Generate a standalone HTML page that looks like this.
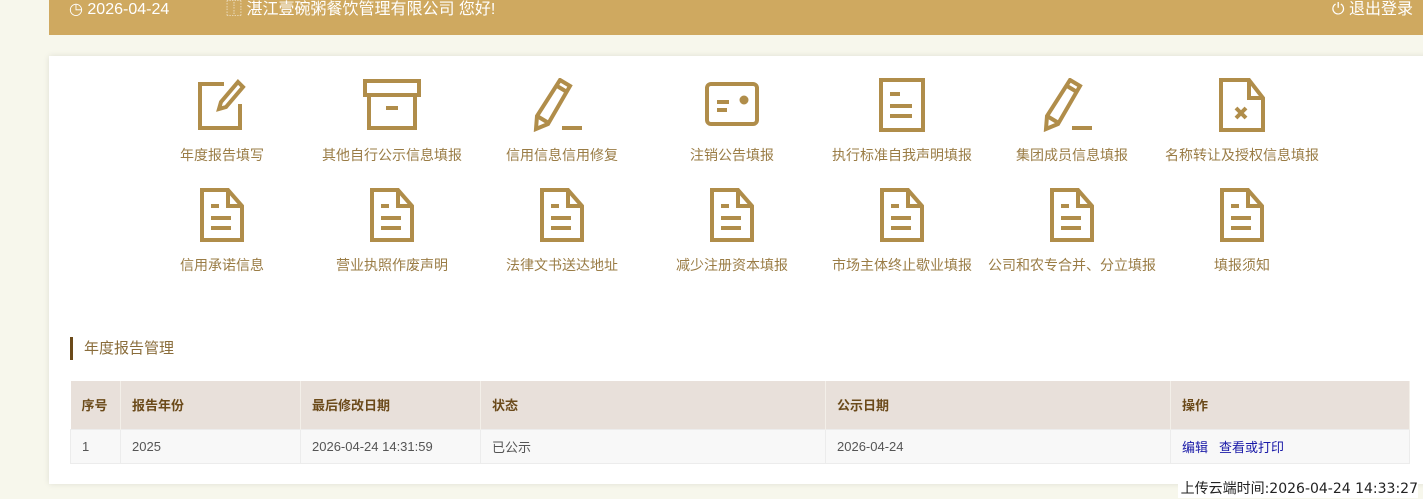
<!DOCTYPE html>
<html><head><meta charset="utf-8"><style>
*{margin:0;padding:0;box-sizing:border-box}
body{width:1423px;height:499px;background:#f7f7ec;font-family:"Liberation Sans","Noto Sans CJK SC",sans-serif;position:relative;overflow:hidden}
.hdr{position:absolute;left:49px;top:0;width:1374px;height:35px;background:#cfa960;color:#fff;font-size:16px}
.hdr span{position:absolute;top:0;line-height:19px}
.card{position:absolute;left:49px;top:56px;width:1380px;height:428px;background:#fff;box-shadow:0 0 6px rgba(0,0,0,.1)}
.it{position:absolute;width:170px;text-align:center;font-size:14px;color:#9a7c45}
.it svg{display:block;margin:0 auto 0}
.it div{position:absolute;left:0;width:170px;top:67px;white-space:nowrap}
.ttl{position:absolute;left:21px;top:281px;height:23px;border-left:3px solid #6b4a1a;padding-left:11px;font-size:15px;color:#8a6d3b;line-height:23px}
table{position:absolute;left:21px;top:325px;width:1340px;border-collapse:collapse;font-size:13px}
th{background:#e8e0da;color:#6b4a1a;height:48px;text-align:left;padding-left:11px;border-right:1px solid #f3efe9;font-weight:bold}
td{background:#f8f8f8;height:34px;padding-left:11px;color:#555;border:1px solid #ececec}
a{color:#1a1aa8;text-decoration:none;margin-right:11px}
.up{position:absolute;right:5px;top:476px;color:#222;background:#fff;padding:2px 0 0 3px;font-family:"DejaVu Sans","Noto Sans CJK SC",sans-serif;font-size:14px}
</style></head><body>
<div class="hdr">
<span style="left:20px">◷ 2026-04-24</span>
<span style="left:177px">⿰ 湛江壹碗粥餐饮管理有限公司 您好!</span>
<span style="right:10px">⏻ 退出登录</span>
</div>
<div class="card">
<div class="it" style="left:88px;top:22px"><svg width="52" height="54" viewBox="0 0 52 54" fill="none" stroke="#b08d4a" stroke-width="4"><path d="M28 6H4v44h40V26"/><path d="M42 4l5 5-17 20-7 2 2-7z"/></svg><div>年度报告填写</div></div>
<div class="it" style="left:258px;top:22px"><svg width="60" height="54" viewBox="0 0 60 54" fill="none" stroke="#b08d4a" stroke-width="4"><rect x="3" y="3" width="54" height="14"/><path d="M7 17v33h46V17"/><path d="M24 30h12"/></svg><div>其他自行公示信息填报</div></div>
<div class="it" style="left:428px;top:22px"><svg width="60" height="54" viewBox="0 0 60 54" fill="none" stroke="#b08d4a" stroke-width="4"><path d="M28 2l10 6-22 38-12 5 1-13z"/><path d="M5 38l10 6M25 8l10 6"/><path d="M30 50h20"/></svg><div>信用信息信用修复</div></div>
<div class="it" style="left:598px;top:22px"><svg width="60" height="54" viewBox="0 0 60 54" fill="none" stroke="#b08d4a" stroke-width="4"><rect x="5" y="6" width="50" height="40" rx="4"/><path d="M15 24h12M15 32h10"/><circle cx="42" cy="22" r="2.5" fill="#b08d4a"/></svg><div>注销公告填报</div></div>
<div class="it" style="left:768px;top:22px"><svg width="52" height="54" viewBox="0 0 52 54" fill="none" stroke="#b08d4a" stroke-width="4"><rect x="5" y="2" width="42" height="50"/><path d="M14 16h10M14 28h22M14 38h22"/></svg><div>执行标准自我声明填报</div></div>
<div class="it" style="left:938px;top:22px"><svg width="60" height="54" viewBox="0 0 60 54" fill="none" stroke="#b08d4a" stroke-width="4"><path d="M28 2l10 6-22 38-12 5 1-13z"/><path d="M5 38l10 6M25 8l10 6"/><path d="M30 50h20"/></svg><div>集团成员信息填报</div></div>
<div class="it" style="left:1108px;top:22px"><svg width="52" height="54" viewBox="0 0 52 54" fill="none" stroke="#b08d4a" stroke-width="4"><path d="M5 2h28l14 18v32H5z"/><path d="M33 2v18h14"/><path d="M20 30l10 10M30 30l-10 10"/></svg><div>名称转让及授权信息填报</div></div>
<div class="it" style="left:88px;top:132px"><svg width="52" height="54" viewBox="0 0 52 54" fill="none" stroke="#b08d4a" stroke-width="4"><path d="M6 2h26l14 16v34H6z"/><path d="M32 2v16h14"/><path d="M15 18h8M15 30h20M15 40h20"/></svg><div>信用承诺信息</div></div>
<div class="it" style="left:258px;top:132px"><svg width="52" height="54" viewBox="0 0 52 54" fill="none" stroke="#b08d4a" stroke-width="4"><path d="M6 2h26l14 16v34H6z"/><path d="M32 2v16h14"/><path d="M15 18h8M15 30h20M15 40h20"/></svg><div>营业执照作废声明</div></div>
<div class="it" style="left:428px;top:132px"><svg width="52" height="54" viewBox="0 0 52 54" fill="none" stroke="#b08d4a" stroke-width="4"><path d="M6 2h26l14 16v34H6z"/><path d="M32 2v16h14"/><path d="M15 18h8M15 30h20M15 40h20"/></svg><div>法律文书送达地址</div></div>
<div class="it" style="left:598px;top:132px"><svg width="52" height="54" viewBox="0 0 52 54" fill="none" stroke="#b08d4a" stroke-width="4"><path d="M6 2h26l14 16v34H6z"/><path d="M32 2v16h14"/><path d="M15 18h8M15 30h20M15 40h20"/></svg><div>减少注册资本填报</div></div>
<div class="it" style="left:768px;top:132px"><svg width="52" height="54" viewBox="0 0 52 54" fill="none" stroke="#b08d4a" stroke-width="4"><path d="M6 2h26l14 16v34H6z"/><path d="M32 2v16h14"/><path d="M15 18h8M15 30h20M15 40h20"/></svg><div>市场主体终止歇业填报</div></div>
<div class="it" style="left:938px;top:132px"><svg width="52" height="54" viewBox="0 0 52 54" fill="none" stroke="#b08d4a" stroke-width="4"><path d="M6 2h26l14 16v34H6z"/><path d="M32 2v16h14"/><path d="M15 18h8M15 30h20M15 40h20"/></svg><div>公司和农专合并、分立填报</div></div>
<div class="it" style="left:1108px;top:132px"><svg width="52" height="54" viewBox="0 0 52 54" fill="none" stroke="#b08d4a" stroke-width="4"><path d="M6 2h26l14 16v34H6z"/><path d="M32 2v16h14"/><path d="M15 18h8M15 30h20M15 40h20"/></svg><div>填报须知</div></div>
<div class="ttl">年度报告管理</div>
<table>
<tr><th style="width:50px">序号</th><th style="width:180px">报告年份</th><th style="width:180px">最后修改日期</th><th style="width:345px">状态</th><th style="width:345px">公示日期</th><th>操作</th></tr>
<tr><td>1</td><td>2025</td><td>2026-04-24 14:31:59</td><td>已公示</td><td>2026-04-24</td><td><a>编辑</a><a>查看或打印</a></td></tr>
</table>
</div>
<div class="up">上传云端时间:2026-04-24 14:33:27</div>
</body></html>
